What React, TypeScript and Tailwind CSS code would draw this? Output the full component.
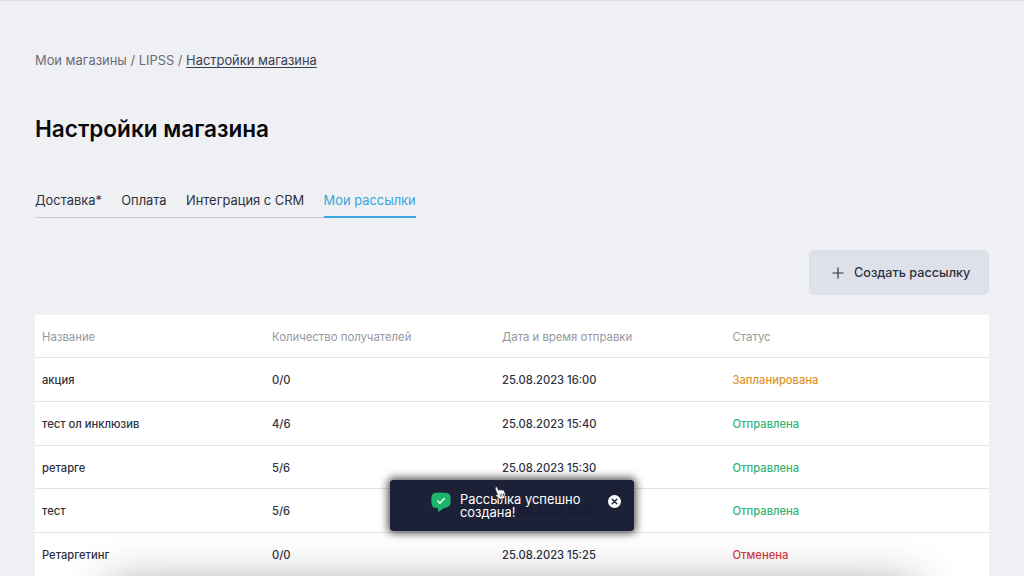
import { useState } from "react";

type Status = "planned" | "sent" | "cancelled";

interface Mailing {
  id: number;
  name: string;
  recipients: string;
  date: string;
  status: Status;
}

const tabs = ["Доставка*", "Оплата", "Интеграция с CRM", "Мои рассылки"];

const columns = [
  "Название",
  "Количество получателей",
  "Дата и время отправки",
  "Статус",
];

const mailings: Mailing[] = [
  { id: 1, name: "акция", recipients: "0/0", date: "25.08.2023 16:00", status: "planned" },
  { id: 2, name: "тест ол инклюзив", recipients: "4/6", date: "25.08.2023 15:40", status: "sent" },
  { id: 3, name: "ретарге", recipients: "5/6", date: "25.08.2023 15:30", status: "sent" },
  { id: 4, name: "тест", recipients: "5/6", date: "25.08.2023 15:30", status: "sent" },
  { id: 5, name: "Ретаргетинг", recipients: "0/0", date: "25.08.2023 15:25", status: "cancelled" },
];

const statuses: Record<Status, { label: string; color: string }> = {
  planned: { label: "Запланирована", color: "text-[#dd9526]" },
  sent: { label: "Отправлена", color: "text-[#35b274]" },
  cancelled: { label: "Отменена", color: "text-[#d83c41]" },
};

const grid = "grid grid-cols-[230px_230px_230.500px_1fr] items-center pl-[7px]";

function Toast({ onClose }: { onClose: () => void }) {
  return (
    <div className="absolute left-[390px] top-[479px] flex h-[51px] w-[243.5px] items-start rounded-[3px] bg-[#131830]/96 pl-[41px] pr-[13px] text-white shadow-[0_0_9px_2px_rgba(0,0,0,0.7)]">
      <svg className="mt-3 h-5 w-5 shrink-0" viewBox="0 0 20 20" fill="none">
        <path
          d="M3.6 1.1Q10-.2 16.4 1.1Q18.9 1.6 19.3 4Q20 8.300 19.300 12Q18.700 15 15.800 15.600L13.100 16L8.200 19.500Q7 20 7 18.700V16.300L3.700 15.700Q1.200 15.100.7 12.500Q0 8.300.7 4Q1.200 1.600 3.600 1.100Z"
          fill="#1cb56c"
        />
        <path
          d="m6.700 9 2.200 2.200 4.300-4.700"
          stroke="white"
          strokeWidth="1.300"
          strokeLinecap="round"
          strokeLinejoin="round"
        />
      </svg>
      <p className="ml-[9px] mt-[13px] w-[140px] text-[12.9px] leading-[13px]">
        Рассылка успешно создана!
      </p>
      <button onClick={onClose} className="ml-auto mt-[15px]" aria-label="Закрыть">
        <svg className="h-[13px] w-[13px]" viewBox="0 0 13 13">
          <circle cx="6.500" cy="6.500" r="6.500" fill="white" />
          <path
            d="m4.200 4.200 4.600 4.600m0-4.600L4.200 8.800"
            stroke="#1b2037"
            strokeWidth="1.400"
            strokeLinecap="round"
          />
        </svg>
      </button>
    </div>
  );
}

function HandCursor() {
  return (
    <svg
      className="pointer-events-none absolute left-[494px] top-[485px] h-[14px] w-[13px]"
      viewBox="0 0 13 14"
    >
      <path
        d="M1.500 1.200Q2.800.2 3.500 1.800L4.600 4.300Q5.400 3.200 6.400 4.100Q7.500 3.200 8.300 4.200Q9.700 3.500 10.300 5Q11.800 7.500 11 10L10.700 12.600L5.900 13.200L2.400 10.300Q1 8.900 2.400 8.500L3.500 8.800L1.200 3Q.8 1.800 1.500 1.200Z"
        fill="white"
        stroke="#20222b"
        strokeWidth="0.800"
      />
      <path
        d="m5.900 7.800.5 3M7.700 7.500l.4 3.100M9.400 7.300l.3 3"
        stroke="#20222b"
        strokeWidth="0.700"
      />
    </svg>
  );
}

export default function App() {
  const [activeTab, setActiveTab] = useState("Мои рассылки");
  const [toastOpen, setToastOpen] = useState(true);

  return (
    <div className="relative h-[576px] w-[1024px] overflow-hidden border-t border-[#dcdde2] bg-[#eff0f4] font-['Inter','Liberation_Sans',sans-serif] text-[#2f313d]">
      <main className="px-[35px] pt-[50px]">
        <nav className="flex h-5 items-center whitespace-pre text-[12.9px] text-[#6b6d78]">
          <a>Мои магазины</a>
          <span> / </span>
          <a>LIPSS</a>
          <span> / </span>
          <a className="text-[#3d3e50] underline underline-offset-[1.500px]">
            Настройки магазина
          </a>
        </nav>

        <h1 className="mt-[42px] text-[22.55px] leading-8 font-semibold text-[#08090d]">
          Настройки магазина
        </h1>

        <div className="mt-[46px] flex w-fit border-b border-[#c9cbd3]">
          {tabs.map((tab) => (
            <button
              key={tab}
              onClick={() => setActiveTab(tab)}
              className={
                tab === activeTab
                  ? "-mb-px h-[27px] border-b-2 border-[#3ba5dc] pb-[5px] text-[12.9px] leading-5 text-[#3ba5dc]"
                  : "mr-[19.400px] h-[26px] pb-[6px] text-[12.9px] leading-5"
              }
            >
              {tab}
            </button>
          ))}
        </div>

        <div className="mt-8 flex justify-end">
          <button className="flex h-[45px] w-[180px] items-center rounded-[5px] bg-[#dee1ea] pl-[23px] text-[12.65px] font-medium">
            <svg
              className="mr-[10px] h-3 w-3"
              viewBox="0 0 12 12"
              stroke="currentColor"
              strokeWidth="1.200"
            >
              <path d="M6 .5v11M.5 6h11" />
            </svg>
            <span className="pt-px">Создать рассылку</span>
          </button>
        </div>

        <section className="mt-5 bg-white">
          <div className={`${grid} h-[43px] border-b border-[#e2e3e6] pt-[3px] text-[11.35px] text-[#96979d]`}>
            {columns.map((column) => (
              <span key={column}>{column}</span>
            ))}
          </div>
          {mailings.map((mailing) => (
            <div
              key={mailing.id}
              className={`${grid} h-[43.800px] border-b border-[#e2e3e6] pt-[2px] text-[11.2px] font-medium last:border-b-0 last:pt-0`}
            >
              <span>{mailing.name}</span>
              <span>{mailing.recipients}</span>
              <span>{mailing.date}</span>
              <span className={statuses[mailing.status].color}>
                {statuses[mailing.status].label}
              </span>
            </div>
          ))}
        </section>
      </main>

      {/* shadow coming up from the bottom edge of the window */}
      <div className="pointer-events-none absolute left-[112px] top-[588px] h-10 w-[800px] rounded-xl shadow-[0_0_46px_6px_rgba(0,0,0,0.36)]" />

      {toastOpen && <Toast onClose={() => setToastOpen(false)} />}
      <HandCursor />
    </div>
  );
}
